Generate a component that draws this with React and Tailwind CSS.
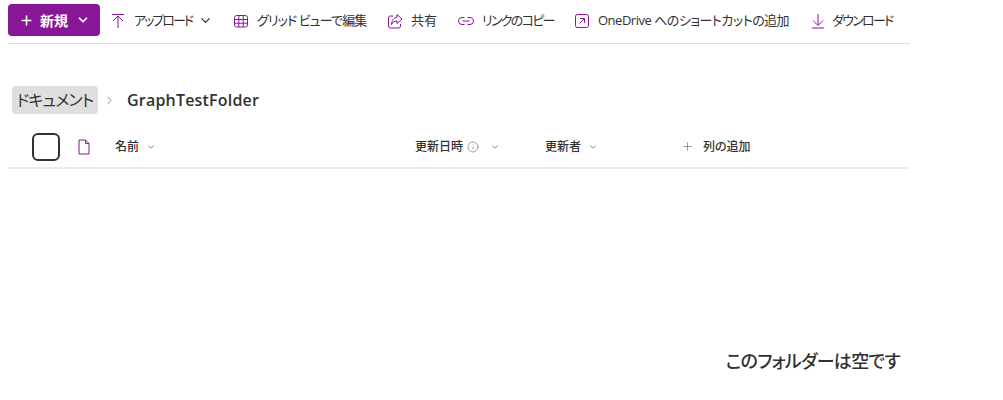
import { Plus, ChevronDown, ChevronRight, Info } from 'lucide-react';

const font = "font-['Open_Sans','Noto_Sans_CJK_JP',sans-serif] [font-feature-settings:'palt']";

function Svg({ children, className }) {
  return (
    <svg width="16" height="16" viewBox="0 0 16 16" fill="none" stroke="currentColor" strokeWidth="1" className={`shrink-0 ${className || ''}`}>
      {children}
    </svg>
  );
}

const UploadIcon = () => (
  <Svg className="text-[#881798]">
    <path d="M2 1.5h12M8 15V3M3 8l5-5 5 5" />
  </Svg>
);
const GridIcon = () => (
  <Svg className="text-[#881798]">
    <rect x="1.5" y="2.5" width="13" height="11.5" rx="2" />
    <path d="M1.5 6.5h13M1.5 10.2h13M5.8 2.5V14M10.2 2.5V14" />
  </Svg>
);
const ShareIcon = () => (
  <Svg className="text-[#881798]">
    <path d="M6 3H3.5a2 2 0 0 0-2 2v8a2 2 0 0 0 2 2h8a2 2 0 0 0 2-2v-2" />
    <path d="M10 1.5l5 4.5-5 4.5V8C7.5 8 5.8 9 4.5 11.5 4.8 7.5 6.8 4.5 10 4.3z" />
  </Svg>
);
const LinkIcon = () => (
  <Svg className="text-[#881798]">
    <path d="M6.5 4.5H4a3.5 3.5 0 0 0 0 7h2.5M9.5 4.5H12a3.5 3.5 0 0 1 0 7H9.5M4.5 8h7" />
  </Svg>
);
const ShortcutIcon = () => (
  <Svg className="text-[#881798]">
    <rect x="1.5" y="1.5" width="13" height="13" rx="2" />
    <path d="M5.5 10.5L10.5 5.5M6 5.5h4.5V10" />
  </Svg>
);
const DownloadIcon = () => (
  <Svg className="text-[#881798]">
    <path d="M8 1v11M3 7.5l5 5 5-5M2 15h12" />
  </Svg>
);

function CommandItem({ icon, label, gap, width, tracking, children }) {
  return (
    <div className={`flex items-center shrink-0 ${width}`}>
      {icon}
      <span className={`${gap} ${tracking || ''} text-[13px] text-[#323130] whitespace-nowrap`}>{label}</span>
      {children}
    </div>
  );
}

export default function App() {
  return (
    <div className={`w-[1003px] h-[400px] bg-white overflow-hidden ${font}`}>
      <div className="ml-2 w-[902px] h-11 flex items-center border-b border-[#e1dfdd] pb-[2px]">
        <button className="w-[92px] h-8 mb-[1px] rounded bg-[#881798] text-white flex items-center pl-[11px] shrink-0">
          <Plus size={15} strokeWidth={2.5} />
          <span className="ml-[6px] text-[14px] font-bold">新規</span>
          <ChevronDown size={14} strokeWidth={3} className="ml-[8px]" />
        </button>
        <div className="flex items-center ml-[10px]">
          <CommandItem icon={<UploadIcon />} label="アップロード" gap="ml-2" tracking="tracking-[-2px]" width="w-[123px]">
            <ChevronDown size={15} strokeWidth={2} className="ml-[6px] text-[#323130]" />
          </CommandItem>
          <CommandItem icon={<GridIcon />} label="グリッド ビューで編集" gap="ml-2" tracking="tracking-[-0.9px]" width="w-[154px]" />
          <CommandItem icon={<ShareIcon />} label="共有" gap="ml-2" width="w-[71px]" />
          <CommandItem icon={<LinkIcon />} label="リンクのコピー" gap="ml-2" tracking="tracking-[-1.7px]" width="w-[116px]" />
          <CommandItem icon={<ShortcutIcon />} label="OneDrive へのショートカットの追加" gap="ml-2" tracking="tracking-[-0.5px]" width="w-[236px]" />
          <CommandItem icon={<DownloadIcon />} label="ダウンロード" gap="ml-[6px]" tracking="tracking-[-1.7px]" width="w-[84px]" />
        </div>
      </div>

      <div className="ml-3 mt-[42px] h-7 flex items-center">
        <span className="h-7 w-[86px] rounded bg-[#e1dfdd] flex items-center justify-center text-[16px] text-[#323130] tracking-[-0.8px] whitespace-nowrap">ドキュメント</span>
        <ChevronRight size={13} strokeWidth={1.25} className="ml-[5px] text-[#605e5c]" />
        <span className="ml-[11px] text-[16px] font-semibold text-[#323130] tracking-[0.2px]">GraphTestFolder</span>
      </div>

      <div className="ml-2 mt-[10px] w-[902px] h-[45px] pt-[2px] flex items-center border-b-2 border-[#edebe9] text-[12px] font-medium text-[#323130]">
        <div className="ml-6 w-7 h-7 rounded-md border-2 border-[#323130] shrink-0" />
        <svg width="16" height="16" viewBox="0 0 16 16" fill="none" stroke="#881798" strokeWidth="1" className="ml-[16px] shrink-0">
          <path d="M3 1h6.5L13 4.5V15H3zM9.5 1v3.5H13" />
        </svg>
        <div className="ml-[23px] w-[300px] flex items-center shrink-0">
          名前
          <ChevronDown size={10} strokeWidth={1.5} className="ml-[7px] text-[#484644]" />
        </div>
        <div className="w-[130px] flex items-center shrink-0">
          更新日時
          <Info size={12} strokeWidth={1} className="ml-[4px] text-[#484644]" />
          <ChevronDown size={10} strokeWidth={1.5} className="ml-[11px] text-[#484644]" />
        </div>
        <div className="w-[136px] flex items-center shrink-0">
          更新者
          <ChevronDown size={10} strokeWidth={1.5} className="ml-[7px] text-[#484644]" />
        </div>
        <Plus size={13} strokeWidth={1} className="text-[#484644] shrink-0" />
        <span className="ml-[9px]">列の追加</span>
      </div>

      <div className="w-[902px] mt-[180px] text-right pr-[2px] text-[18px] font-medium text-[#323130] tracking-[-0.7px] leading-6">
        このフォルダーは空です
      </div>
    </div>
  );
}
